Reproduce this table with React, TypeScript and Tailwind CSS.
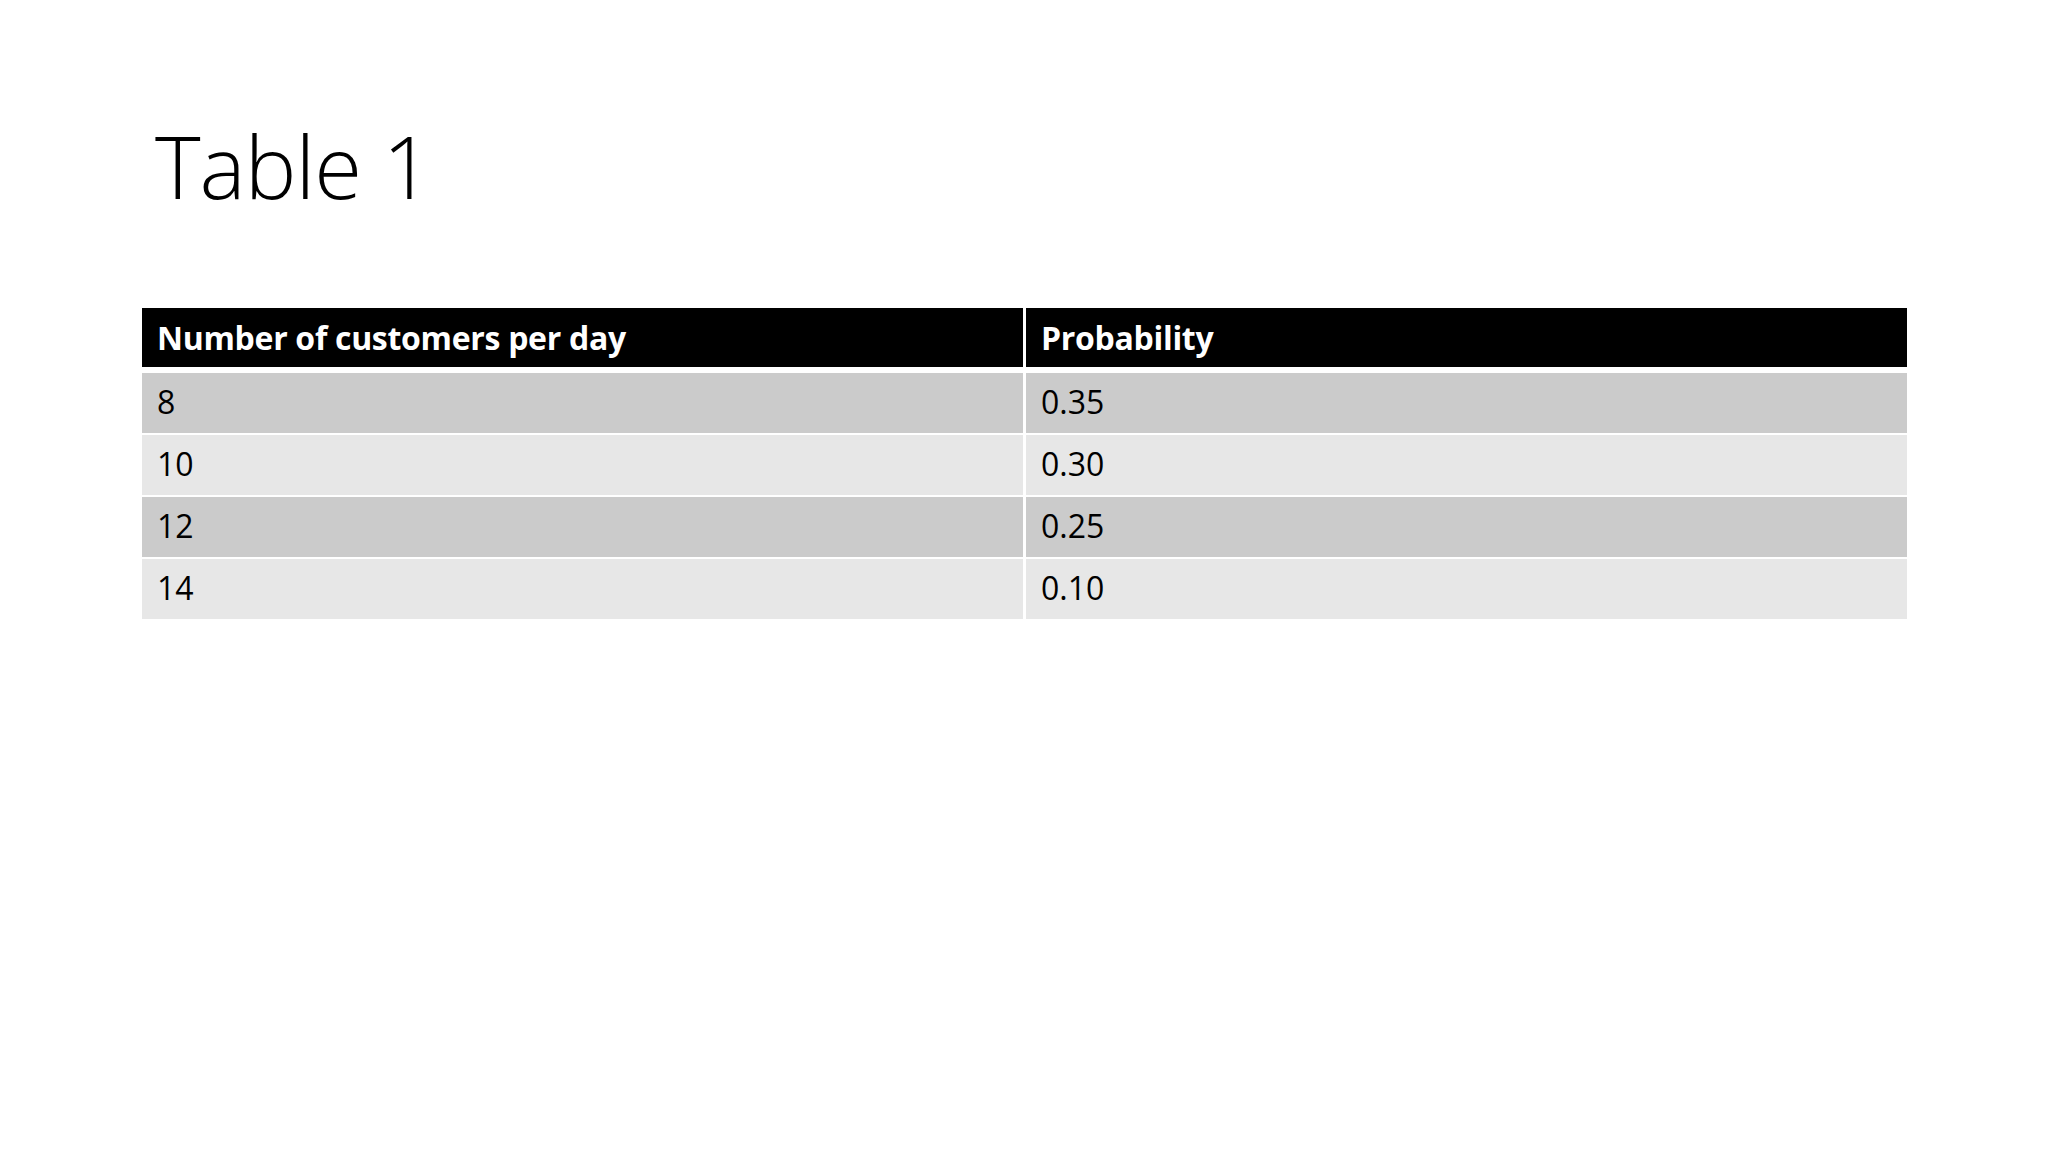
import { Fragment } from "react";

const rows = [
  { count: "8", prob: "0.35" },
  { count: "10", prob: "0.30" },
  { count: "12", prob: "0.25" },
  { count: "14", prob: "0.10" },
];

export default function App() {
  return (
    <div className="w-full h-[1152px] bg-white font-['Open_Sans',sans-serif] text-black">
      {/* Slide title */}
      <div className="pl-[155px] pt-[122px]">
        <h1 className="text-[87px] font-light leading-none tracking-[-1px]">Table 1</h1>
      </div>

      {/* Table */}
      <div className="ml-[142px] mt-[99px] w-[1765px]">
        <div className="grid grid-cols-2 gap-x-[3px]">
          <div className="h-[59px] bg-black text-white font-bold text-[32px] leading-none flex items-center pl-[15px] tracking-[-0.3px]">
            Number of customers per day
          </div>
          <div className="h-[59px] bg-black text-white font-bold text-[32px] leading-none flex items-center pl-[15px] tracking-[-0.3px]">
            Probability
          </div>
        </div>
        <div className="mt-[6px] grid grid-cols-2 gap-x-[3px] gap-y-[2px]">
          {rows.map((r, i) => (
            <Fragment key={r.count}>
              <div
                className={
                  "h-[60px] flex items-center pl-[15px] pb-[3px] text-[32px] leading-none " +
                  (i % 2 === 0 ? "bg-[#cbcbcb]" : "bg-[#e7e7e7]")
                }
              >
                {r.count}
              </div>
              <div
                className={
                  "h-[60px] flex items-center pl-[15px] pb-[3px] text-[32px] leading-none " +
                  (i % 2 === 0 ? "bg-[#cbcbcb]" : "bg-[#e7e7e7]")
                }
              >
                {r.prob}
              </div>
            </Fragment>
          ))}
        </div>
      </div>
    </div>
  );
}
